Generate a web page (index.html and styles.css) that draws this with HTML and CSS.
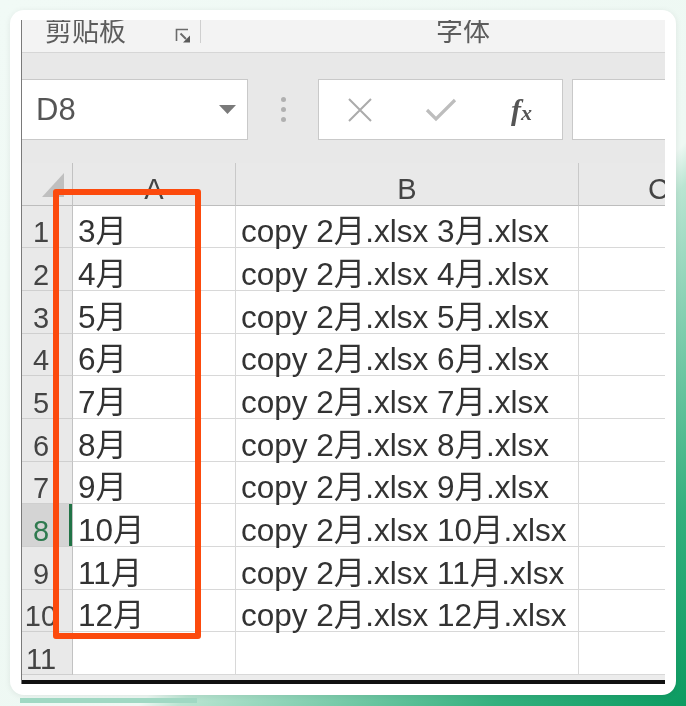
FILE: index.html
```html
<!DOCTYPE html>
<html lang="zh-CN">
<head>
    <meta charset="UTF-8">
    <meta name="viewport" content="width=device-width, initial-scale=1.0">
    <title>批量复制文件</title>
    <link rel="stylesheet" href="styles.css">
</head>
<body>
    <div class="card">
        <div class="shot">
            <div class="ribbon">
                <div class="group clip">
                    <span class="label">剪贴板</span>
                    <svg class="launcher" width="16" height="15" viewBox="0 0 16 15">
                        <path d="M1.5 13V1.5H13" fill="none" stroke="#6b6b6b" stroke-width="1.6"/>
                        <path d="M5.5 5.5L11 11" stroke="#6b6b6b" stroke-width="2"/>
                        <path d="M15 14.5H8L15 7.5Z" fill="#5a5a5a"/>
                    </svg>
                </div>
                <div class="group fonts"><span class="label">字体</span></div>
            </div>

            <div class="fbar">
                <div class="namebox">
                    <span>D8</span>
                    <svg class="drop" width="17" height="9" viewBox="0 0 17 9"><path d="M0 0H17L8.5 9Z" fill="#7a7a7a"/></svg>
                </div>
                <div class="dots"><i></i><i></i><i></i></div>
                <div class="fbtns">
                    <svg width="26" height="24" viewBox="0 0 26 24"><path d="M2 1L24 23M24 1L2 23" stroke="#ababab" stroke-width="2"/></svg>
                    <svg width="32" height="24" viewBox="0 0 32 24"><path d="M2 12L11 21L30 2" fill="none" stroke="#bdbdbd" stroke-width="3.2"/></svg>
                    <span class="fx"><b>f</b><b class="x">x</b></span>
                </div>
                <div class="finput"></div>
            </div>

            <div class="sheet">
                <div class="row head">
                    <div class="num corner">
                        <svg width="22" height="24" viewBox="0 0 22 24"><path d="M22 0V24H0Z" fill="#bfbfbf"/></svg>
                    </div>
                    <div class="c">A</div>
                    <div class="c">B</div>
                    <div class="c">C</div>
                </div>
                <div class="row"><div class="num">1</div><div class="c">3月</div><div class="c">copy 2月.xlsx 3月.xlsx</div><div class="c"></div></div>
                <div class="row"><div class="num">2</div><div class="c">4月</div><div class="c">copy 2月.xlsx 4月.xlsx</div><div class="c"></div></div>
                <div class="row"><div class="num">3</div><div class="c">5月</div><div class="c">copy 2月.xlsx 5月.xlsx</div><div class="c"></div></div>
                <div class="row"><div class="num">4</div><div class="c">6月</div><div class="c">copy 2月.xlsx 6月.xlsx</div><div class="c"></div></div>
                <div class="row"><div class="num">5</div><div class="c">7月</div><div class="c">copy 2月.xlsx 7月.xlsx</div><div class="c"></div></div>
                <div class="row"><div class="num">6</div><div class="c">8月</div><div class="c">copy 2月.xlsx 8月.xlsx</div><div class="c"></div></div>
                <div class="row"><div class="num">7</div><div class="c">9月</div><div class="c">copy 2月.xlsx 9月.xlsx</div><div class="c"></div></div>
                <div class="row active"><div class="num">8</div><div class="c">10月</div><div class="c">copy 2月.xlsx 10月.xlsx</div><div class="c"></div></div>
                <div class="row"><div class="num">9</div><div class="c">11月</div><div class="c">copy 2月.xlsx 11月.xlsx</div><div class="c"></div></div>
                <div class="row"><div class="num">10</div><div class="c">12月</div><div class="c">copy 2月.xlsx 12月.xlsx</div><div class="c"></div></div>
                <div class="row"><div class="num">11</div><div class="c"></div><div class="c"></div><div class="c"></div></div>
            </div>
            <div class="sheet-foot"></div>

            <!-- highlight around column A -->
            <div class="mark"></div>
        </div>
    </div>
    <div class="strip"></div>
</body>
</html>
```

FILE: styles.css
```css
html { height: 706px; background: linear-gradient(to bottom right, #f1faf6 0%, #eef8f3 60%, #bae5d2 63%, #86d0b2 72%, #34b07e 86%, #0b9b61 100%); }
body { margin: 0; padding: 10px 10px 0; width: 686px; height: 706px; box-sizing: border-box; overflow: hidden; font-family: "Liberation Sans", "Noto Sans CJK SC", sans-serif; }
.card { width: 666px; height: 685px; box-sizing: border-box; padding: 10px 11px 11px; background: #fff; border-radius: 14px; box-shadow: 0 1px 6px rgba(0, 0, 0, 0.08); }
.shot { position: relative; width: 644px; height: 664px; box-sizing: border-box; overflow: hidden; border-left: 1px solid #7a7a7a; background: #fff; filter: blur(0.35px); }
.strip { width: 177px; height: 5px; margin: 3px 0 0 10px; background: #a0d8c3; }

/* ribbon group captions */
.ribbon { display: flex; align-items: flex-start; height: 33px; box-sizing: border-box; background: #f3f3f3; border-bottom: 1px solid #d6d6d6; }
.group { display: flex; flex-shrink: 0; align-items: flex-start; height: 23px; }
.group .label { font-family: "Noto Sans CJK SC", sans-serif; font-size: 27px; line-height: 27px; margin-top: -4px; color: #5c5c5c; }
.clip { width: 179px; padding: 0 9px 0 23px; box-sizing: border-box; border-right: 1px solid #cfcfcf; }
.launcher { margin: 8px 0 0 auto; }
.fonts { width: 524px; justify-content: center; }

/* name box + formula bar */
.fbar { display: flex; align-items: flex-start; height: 110px; box-sizing: border-box; padding-top: 26px; background: #e8e8e8; }
.fbar > * { flex-shrink: 0; }
.namebox { display: flex; align-items: center; width: 226px; height: 61px; box-sizing: border-box; padding: 0 11px 0 14px; background: #fff; border: 1px solid #c9c9c9; border-left: none; font-size: 31px; color: #555; }
.namebox span { flex: 1; }
.dots { display: flex; flex-direction: column; align-items: center; justify-content: center; gap: 5px; width: 70px; height: 61px; }
.dots i { width: 5px; height: 5px; border-radius: 50%; background: #b0b0b0; }
.fbtns { display: grid; grid-template-columns: repeat(3, 1fr); align-items: center; justify-items: center; width: 245px; height: 61px; box-sizing: border-box; background: #fff; border: 1px solid #c9c9c9; }
.fx { font-family: "Liberation Serif", serif; font-style: italic; color: #555; font-size: 30px; line-height: 1; }
.fx .x { font-size: 22px; }
.finput { width: 200px; height: 61px; margin-left: 9px; box-sizing: border-box; background: #fff; border: 1px solid #c9c9c9; }

/* worksheet grid */
.row { display: grid; grid-template-columns: 51px 163px 343px 160px; height: 42.7px; }
.row .c, .row .num { display: flex; align-items: flex-end; box-sizing: border-box; white-space: nowrap; }
.c { padding: 0 5px; font-size: 31.5px; line-height: 31px; color: #333; border-right: 1px solid #d8d8d8; border-bottom: 1px solid #d8d8d8; }
.num { justify-content: center; padding-right: 12px; font-size: 29px; line-height: 29px; color: #444; background: #e9e9e9; border-right: 1px solid #c2c2c2; border-bottom: 1px solid #cfcfcf; }
.head { height: 42.6px; }
.head .c { justify-content: center; padding-bottom: 1px; font-size: 29px; line-height: 29px; color: #444; background: #e9e9e9; border-right-color: #c9c9c9; border-bottom-color: #bdbdbd; }
.head .corner { justify-content: flex-end; padding: 0 8px 8px 0; border-bottom-color: #bdbdbd; }
.active .num { background: #d4d4d4; color: #2f7a4f; box-shadow: inset -3px 0 0 #217346; }
.sheet-foot { height: 5px; background: #ececec; border-bottom: 4px solid #111; }

.mark { position: absolute; left: 31px; top: 169px; width: 148px; height: 450px; box-sizing: border-box; border: 6px solid #fc4a0d; border-radius: 3px; }
```
